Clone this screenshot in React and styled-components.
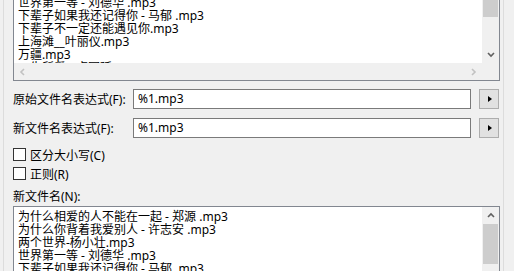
import styled, { createGlobalStyle } from "styled-components";

const GlobalStyle = createGlobalStyle`
  *, *::before, *::after {
    box-sizing: border-box;
  }
  html, body {
    margin: 0;
    padding: 0;
    background: #f0f0f0;
    overflow: hidden;
  }
  body {
    font-family: "Noto Sans", "Noto Sans CJK SC", sans-serif;
    font-size: 12px;
    color: #000;
  }
`;

const Frame = styled.div`
  width: 501px;
  margin-left: 3px;
  padding: 0 3px 0 9px;
  border-left: 1px solid #dcdcdc;
  border-right: 1px solid #dcdcdc;
  height: 271px;
  display: flex;
  flex-direction: column;
`;

const ListBox = styled.div`
  border: 1px solid #828790;
  background: #fff;
  height: ${(p) => p.height}px;
  margin-top: ${(p) => p.offset || 0}px;
  flex-shrink: 0;
  display: grid;
  grid-template-columns: minmax(0, 1fr) 17px;
  grid-template-rows: minmax(0, 1fr) ${(p) => (p.hscroll ? "17px" : "0")};
  grid-template-areas:
    "items vbar"
    "hbar corner";
  overflow: hidden;
`;

const Items = styled.div`
  grid-area: items;
  overflow: hidden;
  padding-left: 4px;
`;

const ItemsInner = styled.div`
  margin-top: ${(p) => p.shift}px;
`;

const Item = styled.div`
  height: 13px;
  line-height: 13px;
  white-space: nowrap;
  font-size: 12px;
`;

const VScroll = styled.div`
  grid-area: vbar;
  background: #f0f0f0;
  display: flex;
  flex-direction: column;
  overflow: hidden;
`;

const Thumb = styled.div`
  background: #cdcdcd;
  height: ${(p) => p.size}px;
  flex-shrink: 0;
  margin: 0 1px;
`;

const Track = styled.div`
  flex: 1;
`;

const Arrow = styled.div`
  height: 17px;
  flex-shrink: 0;
  display: flex;
  align-items: center;
  justify-content: center;
`;

const HScroll = styled.div`
  grid-area: hbar;
  background: #f0f0f0;
  display: flex;
  justify-content: space-between;
  align-items: center;
  overflow: hidden;
`;

const HArrow = styled.div`
  width: 17px;
  height: 17px;
  display: flex;
  align-items: center;
  justify-content: center;
`;

const Corner = styled.div`
  grid-area: corner;
  background: #f0f0f0;
`;

const Row = styled.div`
  display: flex;
  align-items: center;
  height: 20px;
  flex-shrink: 0;
  margin-top: ${(p) => p.gap}px;
`;

const Label = styled.div`
  width: 120px;
  white-space: nowrap;
`;

const TextInput = styled.div`
  width: 338px;
  height: 20px;
  border: 1px solid #7a7a7a;
  background: #fff;
  padding-left: 4px;
  line-height: 18px;
  margin-right: 8px;
`;

const MenuButton = styled.div`
  width: 20px;
  height: 20px;
  border: 1px solid #adadad;
  background: #e1e1e1;
  display: flex;
  align-items: center;
  justify-content: center;
`;

const Triangle = styled.div`
  width: 0;
  height: 0;
  border-top: 3px solid transparent;
  border-bottom: 3px solid transparent;
  border-left: 4px solid #000;
  margin-left: 1px;
`;

const Check = styled.label`
  display: flex;
  align-items: center;
  height: 13px;
  flex-shrink: 0;
  margin-top: ${(p) => p.gap}px;
  white-space: nowrap;
`;

const Box = styled.span`
  width: 13px;
  height: 13px;
  border: 1px solid #333;
  background: #fff;
  margin-right: 4px;
  flex-shrink: 0;
`;

const Caption = styled.div`
  margin-top: 10px;
  height: 14px;
  line-height: 14px;
  margin-bottom: 2px;
  flex-shrink: 0;
`;

const Chevron = ({ dir, color = "#606060" }) => {
  const paths = {
    up: "M1 5 L4 2 L7 5",
    down: "M1 2 L4 5 L7 2",
    left: "M5 1 L2 4 L5 7",
    right: "M2 1 L5 4 L2 7",
  };
  return (
    <svg width="8" height="8" viewBox="0 0 8 8">
      <path d={paths[dir]} fill="none" stroke={color} strokeWidth="1.6" />
    </svg>
  );
};

const oldNames = [
  "为什么相爱的人不能在一起 - 郑源 .mp3",
  "为什么你背着我爱别人 - 许志安 .mp3",
  "两个世界-杨小壮.mp3",
  "世界第一等 - 刘德华 .mp3",
  "下辈子如果我还记得你 - 马郁 .mp3",
  "下辈子不一定还能遇见你.mp3",
  "上海滩__叶丽仪.mp3",
  "万疆.mp3",
  "一生所爱 - 卢冠廷 .mp3",
];

const newNames = [
  "为什么相爱的人不能在一起 - 郑源 .mp3",
  "为什么你背着我爱别人 - 许志安 .mp3",
  "两个世界-杨小壮.mp3",
  "世界第一等 - 刘德华 .mp3",
  "下辈子如果我还记得你 - 马郁 .mp3",
  "下辈子不一定还能遇见你.mp3",
];

const App = () => (
  <>
    <GlobalStyle />
    <Frame>
      <ListBox height={111} offset={-30} hscroll>
        <Items>
          <ItemsInner shift={-14}>
            {oldNames.map((n, i) => (
              <Item key={i}>{n}</Item>
            ))}
          </ItemsInner>
        </Items>
        <VScroll>
          <Arrow>
            <Chevron dir="up" />
          </Arrow>
          <Thumb size={29} />
          <Track />
          <Arrow>
            <Chevron dir="down" />
          </Arrow>
        </VScroll>
        <HScroll>
          <HArrow>
            <Chevron dir="left" color="#c2c2c2" />
          </HArrow>
          <HArrow>
            <Chevron dir="right" color="#c2c2c2" />
          </HArrow>
        </HScroll>
        <Corner />
      </ListBox>

      <Row gap={8}>
        <Label>原始文件名表达式(F):</Label>
        <TextInput>%1.mp3</TextInput>
        <MenuButton>
          <Triangle />
        </MenuButton>
      </Row>
      <Row gap={9}>
        <Label>新文件名表达式(F):</Label>
        <TextInput>%1.mp3</TextInput>
        <MenuButton>
          <Triangle />
        </MenuButton>
      </Row>

      <Check gap={10}>
        <Box />
        区分大小写(C)
      </Check>
      <Check gap={6}>
        <Box />
        正则(R)
      </Check>

      <Caption>新文件名(N):</Caption>

      <ListBox height={90}>
        <Items>
          <ItemsInner shift={3}>
            {newNames.map((n, i) => (
              <Item key={i}>{n}</Item>
            ))}
          </ItemsInner>
        </Items>
        <VScroll>
          <Arrow>
            <Chevron dir="up" />
          </Arrow>
          <Thumb size={40} />
          <Track />
        </VScroll>
      </ListBox>
    </Frame>
  </>
);

export default App;
